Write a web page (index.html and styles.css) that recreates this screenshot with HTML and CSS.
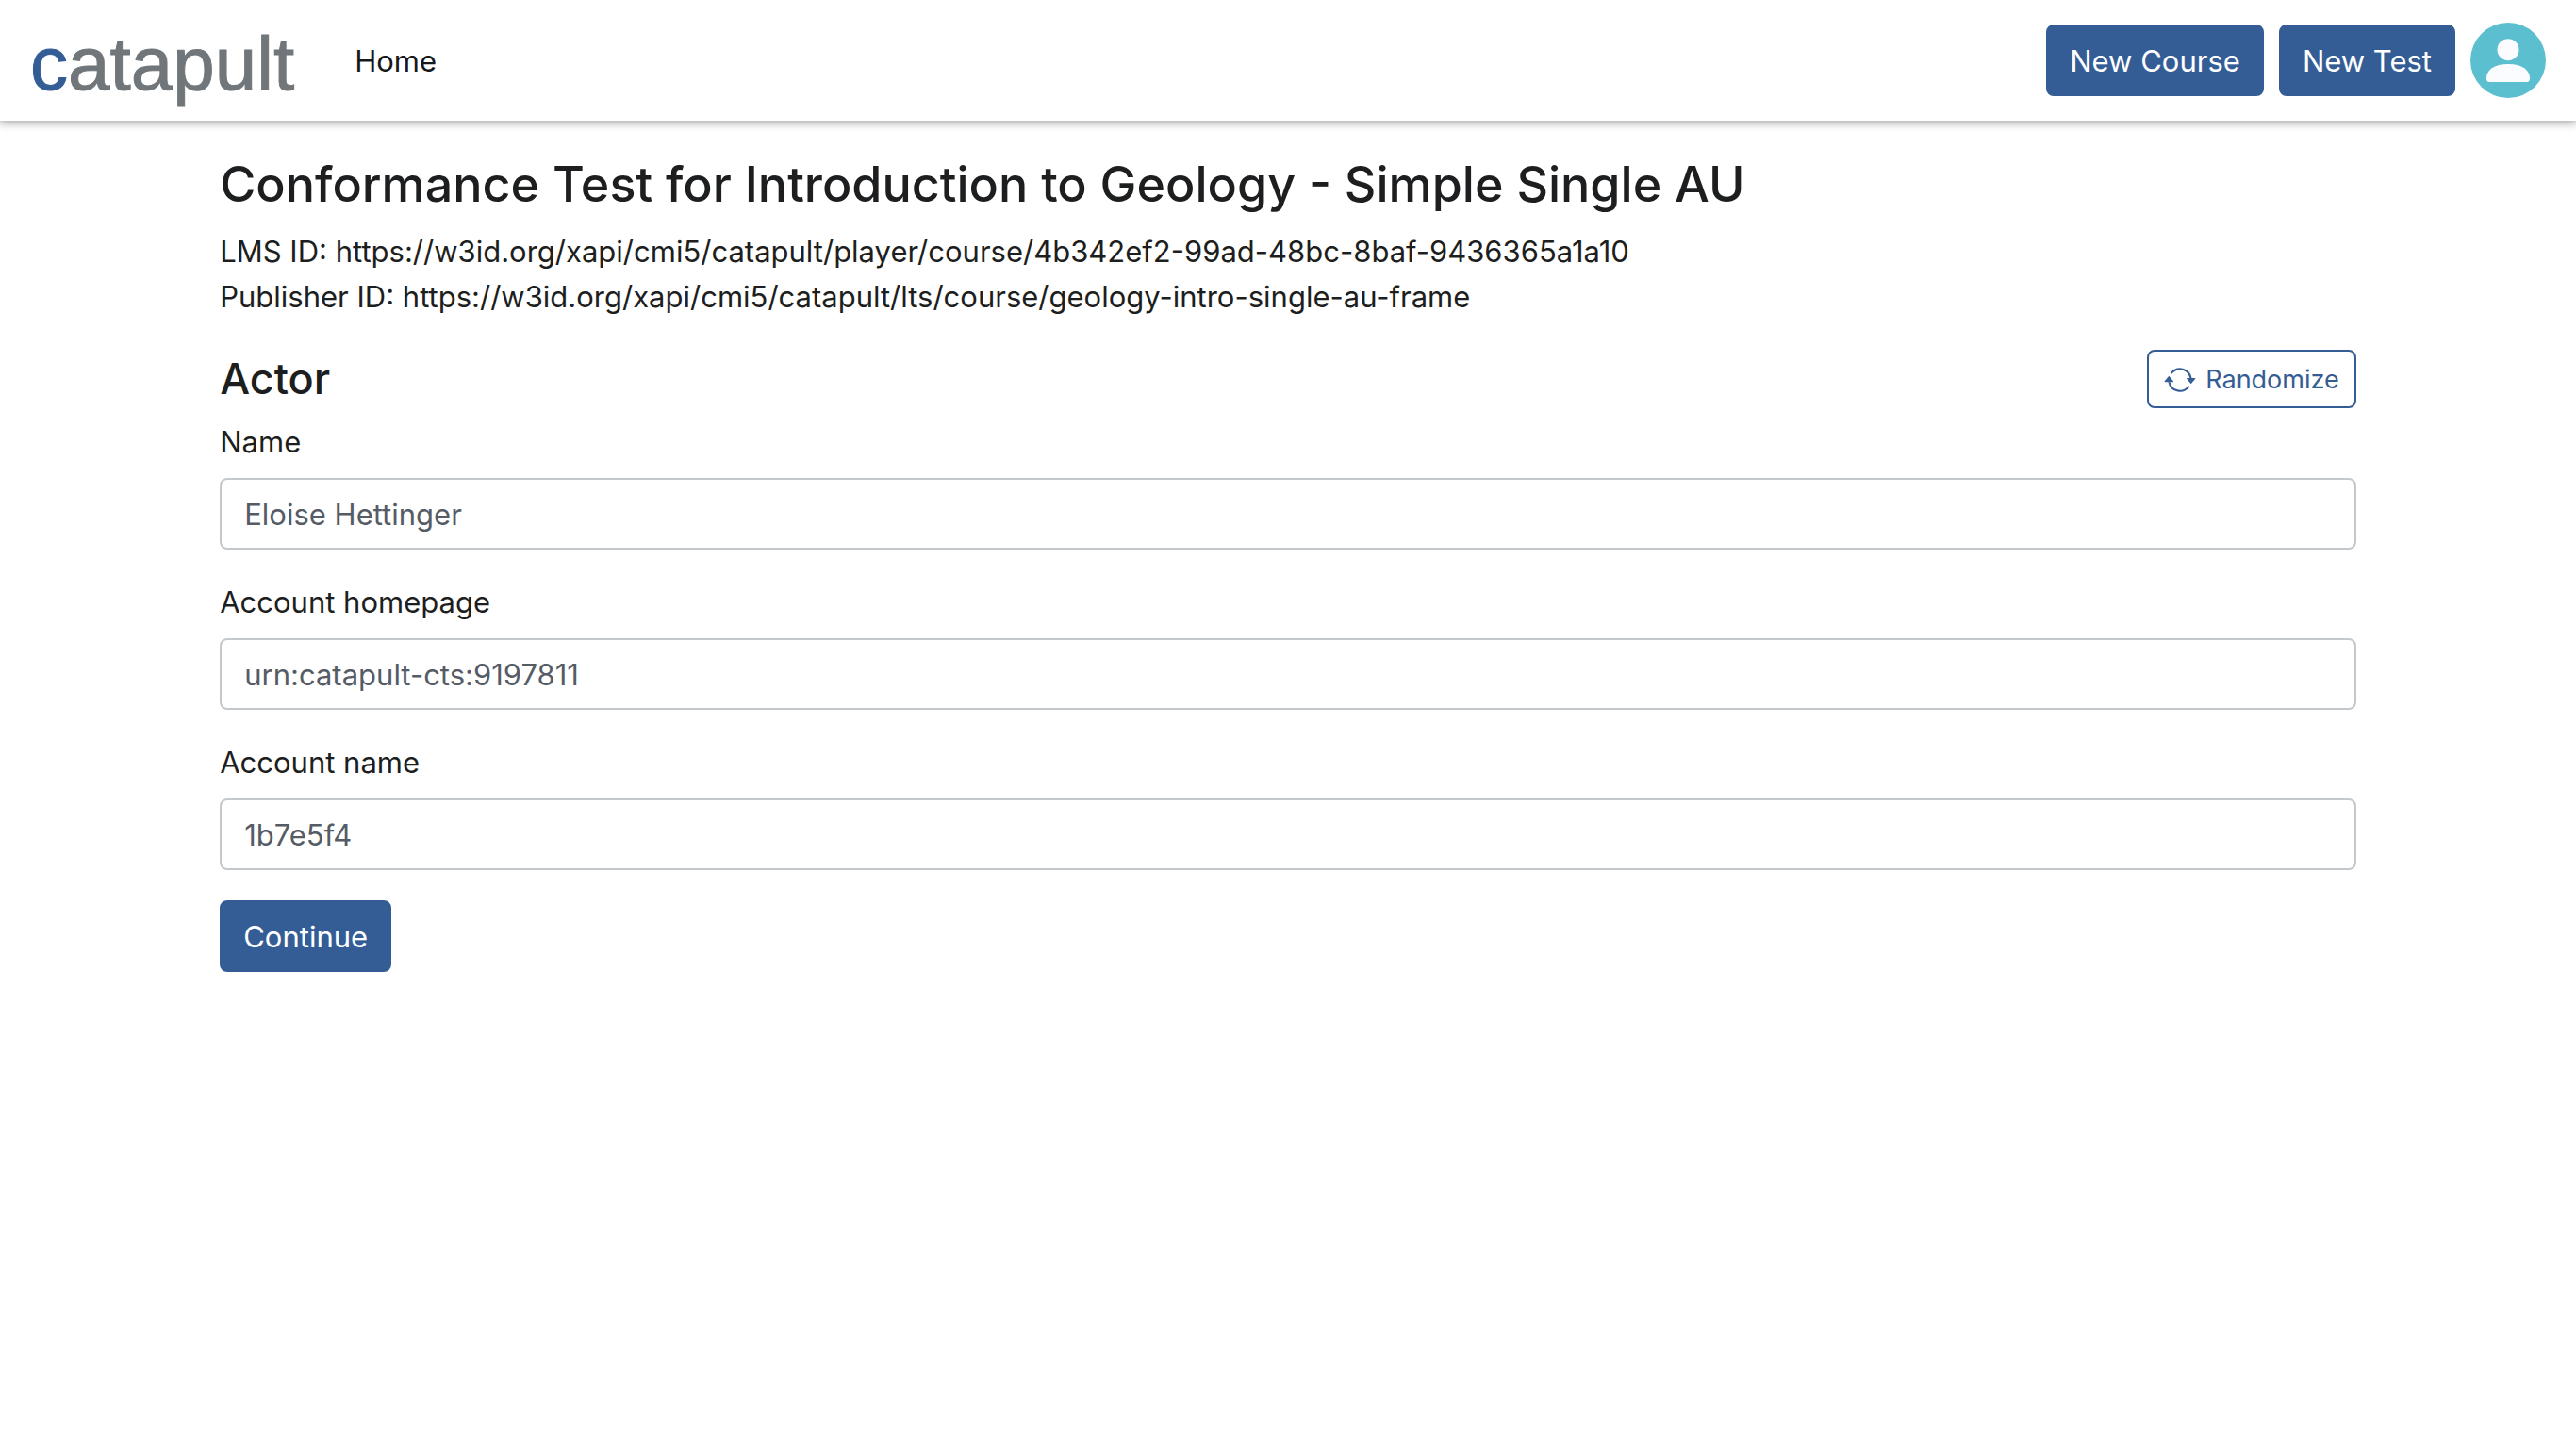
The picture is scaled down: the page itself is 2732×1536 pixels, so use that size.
FILE: index.html
```html
<!DOCTYPE html>
<html lang="en">
<head>
<meta charset="utf-8">
<title>Catapult</title>
<link rel="stylesheet" href="styles.css">
</head>
<body>
<header class="navbar">
  <a class="brand" href="#"><span class="brand-initial">c</span>atapult</a>
  <nav class="nav"><a class="nav-link" href="#">Home</a></nav>
  <div class="actions">
    <button class="btn btn-primary" type="button">New Course</button>
    <button class="btn btn-primary" type="button">New Test</button>
    <button class="avatar" type="button" aria-label="Account">
      <svg viewBox="0 0 80 80" aria-hidden="true">
        <circle cx="40" cy="40" r="40" fill="#5bbfd0"/>
        <circle cx="40" cy="28.700" r="11.500" fill="#fbfcff"/>
        <path d="M17 59.500C17 50 25 44 40 44s23 6 23 15.500q0 3.500-3.500 3.500h-39q-3.500 0-3.500-3.500z" fill="#fbfcff"/>
      </svg>
    </button>
  </div>
</header>
<main class="container">
  <h1 class="title">Conformance Test for Introduction to Geology - Simple Single AU</h1>
  <p class="meta">LMS ID: https://w3id.org/xapi/cmi5/catapult/player/course/4b342ef2-99ad-48bc-8baf-9436365a1a10</p>
  <p class="meta">Publisher ID: https://w3id.org/xapi/cmi5/catapult/lts/course/geology-intro-single-au-frame</p>
  <form class="form">
    <div class="section-head">
      <h2 class="section-title">Actor</h2>
      <button class="btn btn-outline" type="button">
        <svg class="icon" viewBox="0 0 16 16" fill="currentColor" aria-hidden="true">
          <path d="M11.534 7h3.932a.25.25 0 0 1 .192.410l-1.966 2.360a.25.25 0 0 1-.384 0l-1.966-2.360a.25.25 0 0 1 .192-.410zm-11 2h3.932a.25.25 0 0 0 .192-.410L2.692 6.230a.25.25 0 0 0-.384 0L.342 8.590A.25.25 0 0 0 .534 9z"/>
          <path fill-rule="evenodd" d="M8 3c-1.552 0-2.940.707-3.857 1.818a.5.5 0 1 1-.771-.636A6.002 6.002 0 0 1 13.917 7H12.900A5.002 5.002 0 0 0 8 3zM3.100 9a5.002 5.002 0 0 0 8.757 2.182.5.5 0 1 1 .771.636A6.002 6.002 0 0 1 2.083 9H3.100z"/>
        </svg>
        Randomize
      </button>
    </div>
    <div class="field">
      <label for="name">Name</label>
      <input id="name" type="text" value="Eloise Hettinger">
    </div>
    <div class="field">
      <label for="homepage">Account homepage</label>
      <input id="homepage" type="text" value="urn:catapult-cts:9197811">
    </div>
    <div class="field">
      <label for="account">Account name</label>
      <input id="account" type="text" value="1b7e5f4">
    </div>
    <button class="btn btn-primary" type="submit">Continue</button>
  </form>
</main>
</body>
</html>
```
FILE: styles.css
```css
* {
  box-sizing: border-box;
}

body {
  margin: 0;
  background: #fff;
  color: #1d1e20;
  font-family: Inter, "Liberation Sans", sans-serif;
  font-size: 31px;
  line-height: 48px;
}

.navbar {
  display: flex;
  align-items: center;
  height: 128px;
  padding: 0 32px;
  box-shadow: 0 0 10px 1px rgba(0, 0, 0, 0.45);
}

.brand {
  padding-top: 8px;
  color: #70767a;
  font-family: "Liberation Sans", Arial, sans-serif;
  font-size: 80px;
  line-height: 96px;
  text-decoration: none;
  -webkit-text-stroke: 1px currentColor;
}

.brand-initial {
  color: #345d96;
}

.nav {
  margin-left: 64px;
  padding-top: 2px;
}

.nav-link {
  color: #17181a;
  text-decoration: none;
}

.actions {
  display: flex;
  align-items: center;
  gap: 16px;
  margin-left: auto;
}

.btn {
  border: 2px solid #345d96;
  border-radius: 8px;
  font-family: inherit;
  cursor: pointer;
}

.btn-primary {
  padding: 13px 23px 11px;
  background: #345d96;
  color: #fff;
  font-size: 31px;
  line-height: 48px;
}

.btn-outline {
  display: flex;
  align-items: center;
  gap: 10px;
  padding: 9px 16px 7px;
  background: #fff;
  color: #345d96;
  font-size: 27px;
  line-height: 42px;
}

.icon {
  width: 34px;
  height: 34px;
}

.avatar {
  width: 80px;
  height: 80px;
  padding: 0;
  border: 0;
  border-radius: 50%;
  background: none;
  cursor: pointer;
}

.avatar svg {
  display: block;
}

.container {
  width: 83%;
  margin: 0 auto;
  padding: 34px 1px;
}

.title {
  margin: 0 0 14px;
  font-size: 52px;
  font-weight: 500;
  line-height: 67px;
}

.meta {
  margin: 0;
}

.form {
  margin-top: 32px;
}

.section-head {
  display: flex;
  align-items: center;
  justify-content: space-between;
  margin-bottom: 12px;
}

.section-title {
  margin: 0;
  font-size: 45px;
  font-weight: 500;
  line-height: 58px;
}

.field {
  display: flex;
  flex-direction: column;
  gap: 14px;
  margin-bottom: 32px;
}

.field input {
  width: 100%;
  height: 76px;
  padding: 12px 24px;
  border: 2px solid #c3c8cd;
  border-radius: 8px;
  background: #fff;
  color: #555c66;
  font-family: inherit;
  font-size: 31px;
}
```
